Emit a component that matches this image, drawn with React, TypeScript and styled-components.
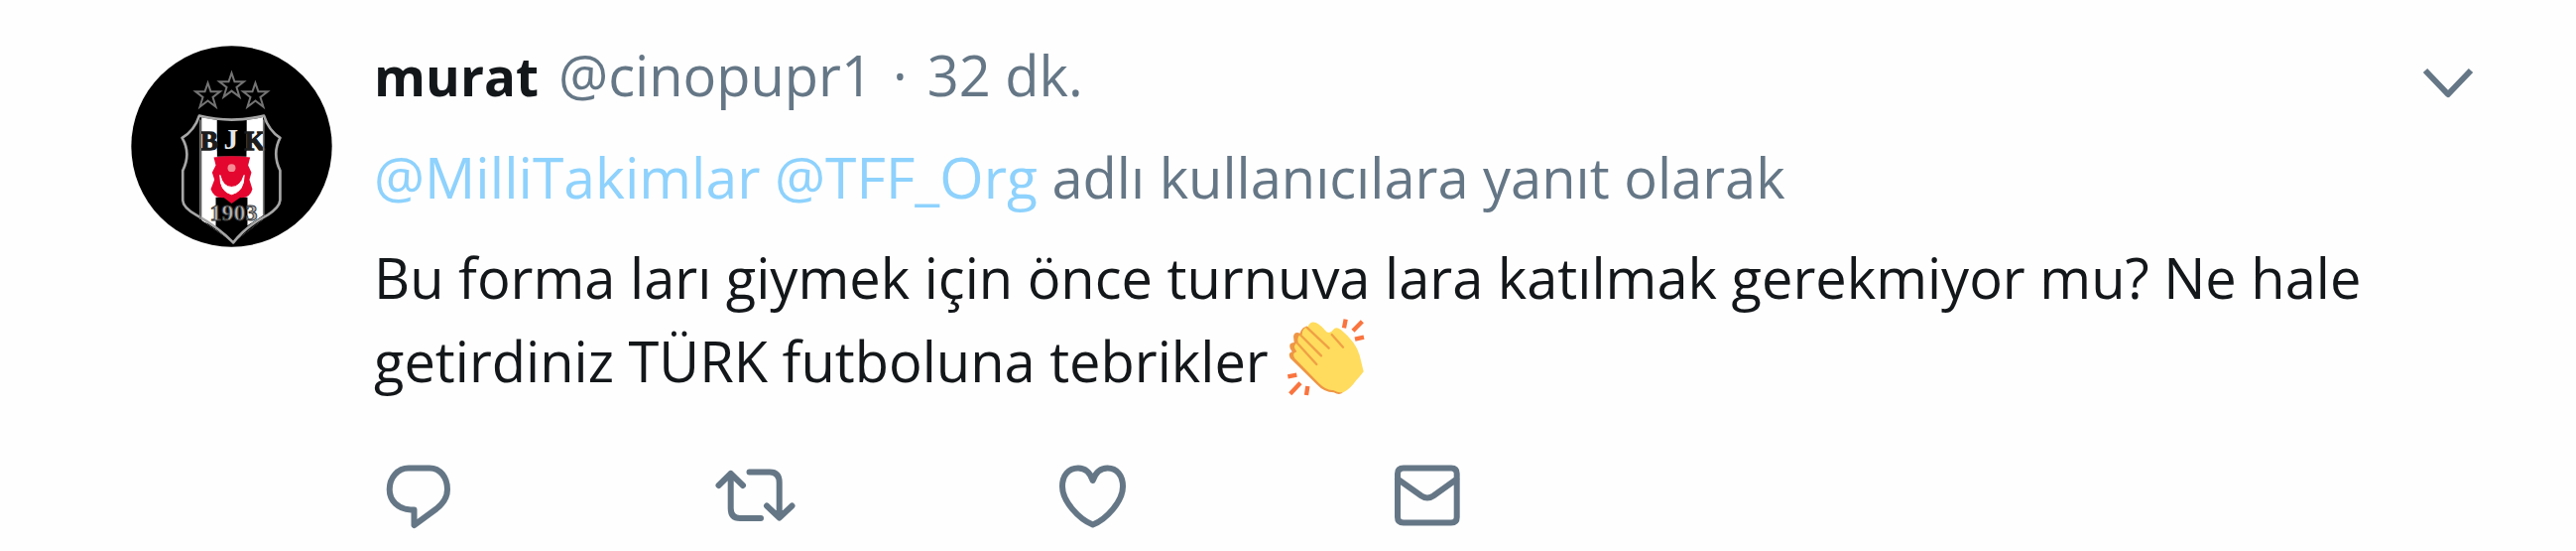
import React from 'react';
import styled, { createGlobalStyle } from 'styled-components';

const GlobalStyle = createGlobalStyle`
  body {
    margin: 0;
    background: #fefefe;
    font-family: 'Open Sans', 'Noto Sans', sans-serif;
    font-size: 56px;
    line-height: 84px;
    color: #14171a;
  }
`;

const Tweet = styled.article`
  display: flex;
  align-items: flex-start;
  gap: 42px;
  padding: 33px 103px 12px 132px;
`;

const AvatarLink = styled.a`
  flex: none;
  display: block;
  margin-top: 13px;
  line-height: 0;

  svg {
    width: 203px;
    height: 203px;
  }
`;

const Content = styled.div`
  flex: 1;
  min-width: 0;
  display: flex;
  flex-direction: column;
  gap: 17px;
`;

const Header = styled.header`
  display: flex;
  align-items: center;
  justify-content: space-between;
`;

const Author = styled.div`
  display: flex;
  align-items: baseline;
  gap: 20px;
  color: #657786;
`;

const Name = styled.a`
  font-size: 53px;
  font-weight: 700;
  color: #14171a;
  text-decoration: none;
`;

const Handle = styled.a`
  color: inherit;
  text-decoration: none;
`;

const IconButton = styled.button`
  display: flex;
  flex: none;
  padding: 0;
  border: 0;
  background: none;
  color: #657786;
  cursor: pointer;

  svg {
    fill: none;
    stroke: currentColor;
    stroke-width: 6;
    stroke-linejoin: round;
  }
`;

const ReplyContext = styled.div`
  color: #657786;
`;

const Mention = styled.a`
  font-size: 57px;
  color: #8ed2fd;
  text-decoration: none;
`;

const Body = styled.p`
  margin: 0;
`;

const Emoji = styled.svg`
  width: 80px;
  height: 78px;
  margin-left: 4px;
  vertical-align: -14px;
`;

const Actions = styled.div`
  display: flex;
  gap: 255px;
  margin-top: 36px;
  padding-left: 3px;
`;

const Star = ({ x, y }: { x: number; y: number }) => (
  <path
    transform={`translate(${x} ${y})`}
    d="M0 -38 L9 -12 H37 L15 5 L24 34 L0 16 L-24 34 L-15 5 L-37 -12 H-9 Z"
    fill="none"
    stroke="#747474"
    strokeWidth="6"
  />
);

const Crest = () => (
  <svg viewBox="65 46 610 610" role="img" aria-label="murat">
    <circle cx="370" cy="351" r="304" fill="#000" />
    <clipPath id="shield">
      <path d="M275 262 Q370 285 465 262 V572 L375 642 L275 572 Z" />
    </clipPath>
    <Star x={298} y={197} />
    <Star x={370} y={167} />
    <Star x={442} y={197} />
    <g clipPath="url(#shield)">
      <path d="M279 255 H326 V365 H415 V255 H466 V580 L375 645 L279 580 Z" fill="#fff" />
      <path d="M326 255 H415 V382 H326 Z M322 505 H418 V660 H322 Z" fill="#000" />
      <path d="M275 576 L322 592 V660 H275 Z M465 560 L415 592 V660 H465 Z" fill="#000" />
    </g>
    <g fontFamily="Liberation Serif, serif" fontWeight="700" textAnchor="middle">
      <text x="302" y="361" fontSize="80" fill="#1c1c1c" stroke="#1c1c1c" strokeWidth="4">B</text>
      <text x="368" y="359" fontSize="88" fill="#e4e4e4">J</text>
      <text x="440" y="361" fontSize="80" fill="#1c1c1c" stroke="#1c1c1c" strokeWidth="4">K</text>
      <text x="376" y="576" fontSize="72" fill="#b4b4b4" stroke="#3a3a3a" strokeWidth="3">1903</text>
    </g>
    <path
      d="M316 384 Q370 376 426 384 L420 408 L430 430 L424 452 L433 480 Q426 508 396 506 L370 524 L346 506 Q316 508 307 480 L318 452 L311 430 L322 408 Z"
      fill="#e4062f"
    />
    <path d="M335 438 Q334 488 370 496 Q408 488 408 438 Q396 474 370 474 Q344 474 335 438 Z" fill="#fff" stroke="#fff" strokeWidth="3" />
    <circle cx="370" cy="416" r="12" fill="#f58a94" />
    <g fill="none" strokeLinejoin="round">
      <path
        d="M272 258 Q370 282 468 258 Q482 302 517 325 Q492 372 517 424 V514 Q515 536 480 558 Q415 592 375 642 Q330 596 262 558 Q223 536 222 514 V424 Q248 372 220 325 Q258 302 272 258 Z"
        stroke="#a6a6a6"
        strokeWidth="8"
      />
      <path d="M275 270 V572 M467 270 V560" stroke="#777" strokeWidth="5" />
    </g>
  </svg>
);

const ClappingHands = () => (
  <Emoji viewBox="27 18 240 234" role="img" aria-label="Alkış">
    <path
      d="M38 137 Q30 122 44 118 L38 108 Q32 90 50 90 L48 72 Q50 56 68 62 Q76 36 96 44 L190 120 L200 238 Q190 252 170 241 Q140 240 118 216 Z"
      fill="#ef9645"
    />
    <path
      d="M92 42 Q98 24 116 30 Q132 38 148 58 Q160 64 168 52 Q176 40 192 52 Q236 88 248 128 L260 178 Q250 192 238 204 Q220 230 200 240 Q186 244 168 234 Q148 236 126 214 L52 138 Q42 122 58 118 Q42 98 62 90 Q58 66 74 66 Q74 46 92 42 Z"
      fill="#ffdc5d"
    />
    <path
      d="M88 44 L155 107 M68 66 L132 130 M60 92 L118 156 M164 66 L198 104"
      fill="none"
      stroke="#f0a045"
      strokeWidth="7"
      strokeLinecap="round"
    />
    <path
      d="M206 20 L201 46 M256 26 L228 55 M234 80 L261 74 M31 193 L58 188 M69 212 L38 245 M91 222 L87 249"
      fill="none"
      stroke="#fa743e"
      strokeWidth="13"
    />
  </Emoji>
);

const Chevron = () => (
  <svg width="52" height="52" viewBox="0 0 52 52">
    <path d="M3 21 L26 45 L49 21" />
  </svg>
);

const ACTIONS = [
  {
    label: 'Yanıtla',
    d: 'M32 13.5 H53 C64 13.5 71 23 71 35 C71 43 67 49 60 54.5 L37.5 71 V55.5 H34 C21 55 12.7 46 12.7 35 C12.7 23 21 13.5 32 13.5 Z',
  },
  {
    label: 'Retweetle',
    d: 'M5.5 31 L17.7 19 L30 31 M17.7 19 V54 Q17.7 64 27 64 H48 M36.5 17.5 H57 Q66.7 17.5 66.7 28 V63 M54 51.5 L66.7 63.5 L79.5 51.5',
  },
  {
    label: 'Beğen',
    d: 'M43.7 26 C41 18 36 13.5 29 13.5 C19 13.5 13 21 13 32 C13 47 30 65 43.7 70.5 C57.4 65 74 47 74 32 C74 21 68 13.5 58.5 13.5 C51.5 13.5 46.4 18 43.7 26 Z',
  },
  {
    label: 'Direkt Mesaj',
    d: 'M18 13.5 H66 Q71.7 13.5 71.7 19 V63 Q71.7 68.5 66 68.5 H18 Q12 68.5 12 63 V19 Q12 13.5 18 13.5 Z M12 24.5 L36 41.5 Q42 45.5 48 41.5 L71.7 24.5',
  },
];

export default function App() {
  return (
    <>
      <GlobalStyle />
      <Tweet>
        <AvatarLink href="#murat">
          <Crest />
        </AvatarLink>
        <Content>
          <Header>
            <Author>
              <Name href="#murat">murat</Name>
              <Handle href="#murat">@cinopupr1</Handle>
              <span>·</span>
              <time>32 dk.</time>
            </Author>
            <IconButton type="button" aria-label="Daha fazla">
              <Chevron />
            </IconButton>
          </Header>
          <ReplyContext>
            <Mention href="#MilliTakimlar">@MilliTakimlar</Mention>{' '}
            <Mention href="#TFF_Org">@TFF_Org</Mention> adlı kullanıcılara yanıt olarak
          </ReplyContext>
          <Body>
            Bu forma ları giymek için önce turnuva lara katılmak gerekmiyor mu? Ne hale getirdiniz TÜRK
            futboluna tebrikler <ClappingHands />
          </Body>
          <Actions>
            {ACTIONS.map(({ label, d }) => (
              <IconButton key={label} type="button" aria-label={label}>
                <svg width="84" height="84" viewBox="0 0 84 84" strokeLinecap="round">
                  <path d={d} />
                </svg>
              </IconButton>
            ))}
          </Actions>
        </Content>
      </Tweet>
    </>
  );
}
